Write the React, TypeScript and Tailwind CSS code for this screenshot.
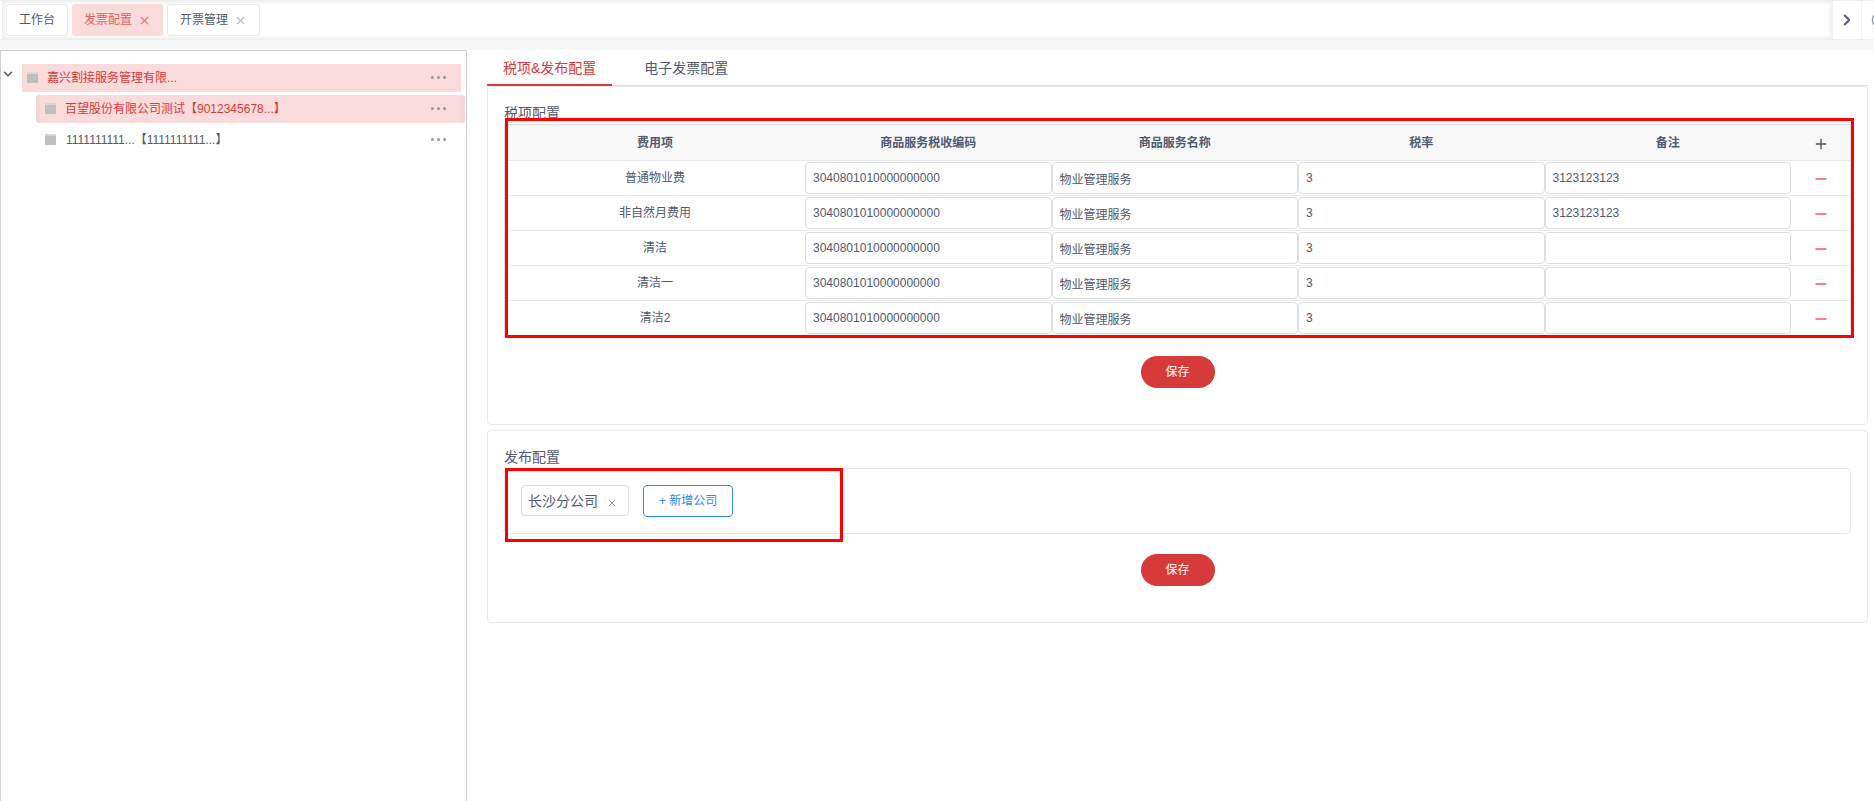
import { useState } from 'react';
import { ChevronRight, ChevronDown, Plus, Minus, X, CircleX } from 'lucide-react';

const FONT = "font-['Liberation_Sans','Noto_Sans_CJK_SC',sans-serif]";

interface TaxRow {
  item: string;
  code: string;
  name: string;
  rate: string;
  remark: string;
}

const INITIAL_ROWS: TaxRow[] = [
  { item: '普通物业费', code: '3040801010000000000', name: '物业管理服务', rate: '3', remark: '3123123123' },
  { item: '非自然月费用', code: '3040801010000000000', name: '物业管理服务', rate: '3', remark: '3123123123' },
  { item: '清洁', code: '3040801010000000000', name: '物业管理服务', rate: '3', remark: '' },
  { item: '清洁一', code: '3040801010000000000', name: '物业管理服务', rate: '3', remark: '' },
  { item: '清洁2', code: '3040801010000000000', name: '物业管理服务', rate: '3', remark: '' },
];

const FIELDS: { key: keyof TaxRow; label: string }[] = [
  { key: 'code', label: '商品服务税收编码' },
  { key: 'name', label: '商品服务名称' },
  { key: 'rate', label: '税率' },
  { key: 'remark', label: '备注' },
];

function TagsBar() {
  return (
    <header className="flex h-10 shrink-0 border-y border-[#eeeeee] bg-white">
      <div className="ml-0.5 flex min-w-0 flex-1 items-center gap-1 border-l border-[#f0f0f0] pl-[3px] shadow-[inset_0_0_3px_2px_rgba(100,100,100,0.1)]">
        <button className="h-8 rounded-[3px] border border-[#e8eaec] bg-white px-3 text-xs text-[#515a6e]">工作台</button>
        <div className="flex h-8 items-center gap-1.5 rounded-[3px] bg-[#fadbdc] px-3 text-xs text-[#e4615f]">
          <button>发票配置</button>
          <button aria-label="关闭发票配置" className="text-[#e88280]"><X className="size-[13px]" strokeWidth={2.5} /></button>
        </div>
        <div className="flex h-8 items-center gap-1.5 rounded-[3px] border border-[#e8eaec] bg-white px-3 text-xs text-[#515a6e]">
          <button>开票管理</button>
          <button aria-label="关闭开票管理" className="text-[#bbbbbb]"><X className="size-[13px]" strokeWidth={2} /></button>
        </div>
      </div>
      <button aria-label="向右滚动" className="flex w-[29px] items-center justify-center border-l border-[#f0f0f0] text-[#515a6e]">
        <ChevronRight className="size-[18px]" strokeWidth={2.5} />
      </button>
      <button aria-label="关闭标签" className="w-[13px] overflow-hidden border-l border-[#f0f0f0] pl-[9px] text-[#7f9fc4]">
        <CircleX className="size-4" />
      </button>
    </header>
  );
}

function MoreDots({ label }: { label: string }) {
  return (
    <button aria-label={label} className="mb-0.5 flex gap-[3px]">
      <span className="size-[3px] rounded-full bg-[#999999]" />
      <span className="size-[3px] rounded-full bg-[#999999]" />
      <span className="size-[3px] rounded-full bg-[#999999]" />
    </button>
  );
}

function FolderMark() {
  return <span className="mb-0.5 size-[11px] shrink-0 border-t-2 border-[#d6d6d6] bg-[#bfbfbf]" />;
}

function CompanyTree() {
  return (
    <aside className="w-[467px] shrink-0 border border-b-0 border-[#cfcfdb] pt-[13px]">
      <ul className="flex flex-col gap-[3px] text-xs">
        <li className="flex">
          <button aria-label="收起" className="flex h-5 w-[21px] items-center text-[#515a6e]">
            <ChevronDown className="size-3.5" strokeWidth={2.5} />
          </button>
          <div className="mr-[5px] flex h-7 flex-1 items-center bg-[#fadbdc] pr-[15px] pl-[5px] text-[#d93a3a]">
            <FolderMark />
            <a href="#" className="mr-auto ml-[9px]">嘉兴割接服务管理有限...</a>
            <MoreDots label="更多操作" />
          </div>
        </li>
        <li className="mr-px ml-[35px] flex h-7 items-center rounded-[3px] border-x-4 border-[#f3d6d7] bg-[#fadbdc] pr-[15px] pl-[5px] text-[#d93a3a]">
          <FolderMark />
          <a href="#" className="mr-auto ml-[9px]">百望股份有限公司测试【9012345678...】</a>
          <MoreDots label="更多操作" />
        </li>
        <li className="mr-px ml-[35px] flex h-7 items-center pr-[19px] pl-[9px] text-[#515a6e]">
          <FolderMark />
          <a href="#" className="mr-auto ml-[10px]">1111111111...【1111111111...】</a>
          <MoreDots label="更多操作" />
        </li>
      </ul>
    </aside>
  );
}

function SaveButton() {
  return (
    <button className="mx-auto mt-5 block h-8 w-[74px] rounded-full bg-[#d73a3b] text-xs text-white">保存</button>
  );
}

function TaxTable() {
  const [rows, setRows] = useState(INITIAL_ROWS);

  function updateRow(index: number, key: keyof TaxRow, value: string) {
    setRows(rows.map((row, i) => (i === index ? { ...row, [key]: value } : row)));
  }

  function addRow() {
    setRows([...rows, { item: '', code: '', name: '', rate: '', remark: '' }]);
  }

  return (
    <div className="relative border-x border-t border-[#dcdee2]">
      <table className="w-full table-fixed border-separate border-spacing-0 text-xs">
        <colgroup>
          <col className="w-[300px]" />
          <col />
          <col />
          <col />
          <col />
          <col className="w-[59px]" />
        </colgroup>
        <thead>
          <tr className="h-9 bg-[#f8f8f9]">
            <th className="border-b border-[#e8eaec] font-bold">费用项</th>
            {FIELDS.map((f) => (
              <th key={f.key} className="border-b border-[#e8eaec] font-bold">{f.label}</th>
            ))}
            <th className="border-b border-[#e8eaec] pt-0.5">
              <button aria-label="添加" onClick={addRow} className="mx-auto block text-[#515151]">
                <Plus className="size-4" strokeWidth={2} />
              </button>
            </th>
          </tr>
        </thead>
        <tbody>
          {rows.map((row, i) => (
            <tr key={i} className="h-[35px]">
              <td className="border-b border-[#e8eaec] text-center">{row.item}</td>
              {FIELDS.map((f) => (
                <td key={f.key} className="border-b border-[#e8eaec] px-0 py-px">
                  <input
                    aria-label={f.label}
                    value={row[f.key]}
                    onChange={(e) => updateRow(i, f.key, e.target.value)}
                    className="block h-8 w-full rounded border border-[#dcdee2] bg-white px-[7px]"
                  />
                </td>
              ))}
              <td className="border-b border-[#e8eaec] pt-0.5">
                <button
                  aria-label="删除"
                  onClick={() => setRows(rows.filter((_, n) => n !== i))}
                  className="mx-auto block text-[#ff7f7f]"
                >
                  <Minus className="size-4" strokeWidth={3} />
                </button>
              </td>
            </tr>
          ))}
        </tbody>
      </table>
      <div className="pointer-events-none absolute -top-[7px] -right-1 -bottom-0.5 left-0 border-3 border-[#ff0000]" />
    </div>
  );
}

function PublishCompanies() {
  return (
    <div className="relative flex h-[66px] items-start gap-3.5 rounded border border-[#e8eaec] px-4 pt-4">
      <span className="flex h-[31px] items-center gap-2 rounded border border-[#dcdee2] pr-2.5 pl-1.5 text-sm">
        长沙分公司
        <button aria-label="移除长沙分公司" className="mt-1 text-[#999aaa]"><X className="size-3" strokeWidth={2} /></button>
      </span>
      <button className="h-8 rounded border border-[#2d8cf0] px-[15px] text-xs text-[#2d8cf0]">+ 新增公司</button>
      <div className="pointer-events-none absolute -top-px -bottom-[9px] left-0 w-[338px] border-3 border-[#ff0000]" />
    </div>
  );
}

export default function App() {
  return (
    <div className={`flex min-h-screen flex-col bg-white text-[#515a6e] ${FONT}`}>
      <TagsBar />
      <div className="h-2.5 shrink-0 bg-[#f5f7f9]" />
      <div className="flex flex-1">
        <CompanyTree />
        <main className="mr-1.5 ml-5 min-w-0 flex-1">
          <nav className="flex h-9 border-b border-[#dcdee2] text-sm">
            <button className="-mb-px h-9 border-b-2 border-[#d93a3a] px-4 pt-px text-[#d93a3a]">税项&amp;发布配置</button>
            <button className="-mb-px h-9 border-b-2 border-transparent px-8 pt-px">电子发票配置</button>
          </nav>
          <section className="rounded border border-[#e8eaec] px-4 pt-4 pb-9">
            <h2 className="h-[21px] text-sm leading-[21px]">税项配置</h2>
            <TaxTable />
            <SaveButton />
          </section>
          <section className="mt-[5px] rounded border border-[#e8eaec] px-4 pt-4 pb-9">
            <h2 className="h-[21px] text-sm leading-[21px]">发布配置</h2>
            <PublishCompanies />
            <SaveButton />
          </section>
        </main>
      </div>
    </div>
  );
}
